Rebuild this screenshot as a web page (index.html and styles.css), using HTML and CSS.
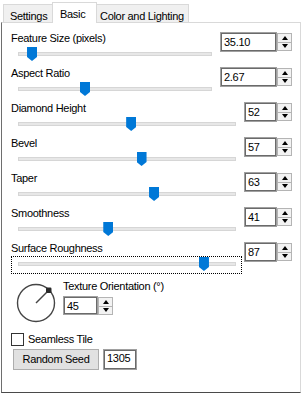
FILE: index.html
```html
<!DOCTYPE html>
<html lang="en">
<head>
    <meta charset="UTF-8">
    <title>Basic</title>
    <link rel="stylesheet" href="styles.css">
</head>
<body>
    <div class="window">
        <div class="tabs">
            <div class="tab tab-settings">Settings</div>
            <div class="tab tab-basic active">Basic</div>
            <div class="tab tab-color">Color and Lighting</div>
        </div>

        <div class="panel">
            <div class="row">
                <div class="slider-col">
                    <div class="label">Feature Size (pixels)</div>
                    <div class="slider short">
                        <div class="track"></div>
                        <div class="thumb" style="--pos: 4.9"></div>
                    </div>
                </div>
                <div class="spin">
                    <div class="spin-box wide">35.10</div>
                    <div class="spin-btns"><span class="up"></span><span class="down"></span></div>
                </div>
            </div>

            <div class="row">
                <div class="slider-col">
                    <div class="label">Aspect Ratio</div>
                    <div class="slider short">
                        <div class="track"></div>
                        <div class="thumb" style="--pos: 33.7"></div>
                    </div>
                </div>
                <div class="spin">
                    <div class="spin-box wide">2.67</div>
                    <div class="spin-btns"><span class="up"></span><span class="down"></span></div>
                </div>
            </div>

            <div class="row">
                <div class="slider-col">
                    <div class="label">Diamond Height</div>
                    <div class="slider">
                        <div class="track"></div>
                        <div class="thumb" style="--pos: 52"></div>
                    </div>
                </div>
                <div class="spin">
                    <div class="spin-box">52</div>
                    <div class="spin-btns"><span class="up"></span><span class="down"></span></div>
                </div>
            </div>

            <div class="row">
                <div class="slider-col">
                    <div class="label">Bevel</div>
                    <div class="slider">
                        <div class="track"></div>
                        <div class="thumb" style="--pos: 57"></div>
                    </div>
                </div>
                <div class="spin">
                    <div class="spin-box">57</div>
                    <div class="spin-btns"><span class="up"></span><span class="down"></span></div>
                </div>
            </div>

            <div class="row">
                <div class="slider-col">
                    <div class="label">Taper</div>
                    <div class="slider">
                        <div class="track"></div>
                        <div class="thumb" style="--pos: 63"></div>
                    </div>
                </div>
                <div class="spin">
                    <div class="spin-box">63</div>
                    <div class="spin-btns"><span class="up"></span><span class="down"></span></div>
                </div>
            </div>

            <div class="row">
                <div class="slider-col">
                    <div class="label">Smoothness</div>
                    <div class="slider">
                        <div class="track"></div>
                        <div class="thumb" style="--pos: 41"></div>
                    </div>
                </div>
                <div class="spin">
                    <div class="spin-box">41</div>
                    <div class="spin-btns"><span class="up"></span><span class="down"></span></div>
                </div>
            </div>

            <div class="row">
                <div class="slider-col">
                    <div class="label">Surface Roughness</div>
                    <div class="slider focused">
                        <div class="track"></div>
                        <div class="thumb" style="--pos: 87"></div>
                    </div>
                </div>
                <div class="spin">
                    <div class="spin-box">87</div>
                    <div class="spin-btns"><span class="up"></span><span class="down"></span></div>
                </div>
            </div>

            <div class="orient">
                <svg class="dial" width="40" height="40" viewBox="0 0 40 40">
                    <circle cx="20" cy="20" r="18.5" fill="none" stroke="#454545" stroke-width="1.4"/>
                    <line x1="20" y1="20" x2="32" y2="8" stroke="#454545" stroke-width="1.4"/>
                    <rect x="30" y="4.5" width="5.5" height="5.5" rx="1.2" fill="#2a2a2a"/>
                </svg>
                <div class="orient-col">
                    <div class="label">Texture Orientation (°)</div>
                    <div class="spin">
                        <div class="spin-box mid">45</div>
                        <div class="spin-btns"><span class="up"></span><span class="down"></span></div>
                    </div>
                </div>
            </div>

            <label class="check">
                <span class="check-box"></span>
                <span>Seamless Tile</span>
            </label>

            <div class="seed-row">
                <button class="btn">Random Seed</button>
                <div class="seed-box">1305</div>
            </div>
        </div>
    </div>
</body>
</html>
```

FILE: styles.css
```css
* {
    margin: 0;
    padding: 0;
    box-sizing: border-box;
}

body {
    width: 303px;
    height: 394px;
    overflow: hidden;
    background: #fff;
    font-family: "Liberation Sans", Arial, sans-serif;
    font-size: 11px;
    line-height: 13px;
    letter-spacing: -0.3px;
    color: #000;
}

.window {
    padding-left: 1px;
}

/* tab strip */
.tabs {
    display: flex;
    align-items: flex-end;
    height: 22px;
    padding-left: 2px;
}

.tab {
    height: 18px;
    padding-top: 5px;
    background: #f0f0f0;
    border: 1px solid #d9d9d9;
    border-bottom: none;
    white-space: nowrap;
}

.tab-settings { width: 49px; padding-left: 6px; border-right: none; }
.tab-basic { width: 45px; padding-left: 7px; }
.tab-color { width: 92px; padding-left: 3px; border-left: none; }

.tab.active {
    height: 21px;
    background: #fff;
    margin-bottom: -1px;
    position: relative;
    z-index: 1;
}

/* page */
.panel {
    width: 300px;
    height: 371px;
    background: #fff;
    border: 1px solid #d9d9d9;
    border-left-color: #6e6e6e;
    border-bottom-color: #4a4a4a;
    padding: 9px 8px 0 9px;
}

.row {
    display: flex;
    justify-content: space-between;
    height: 35px;
}

.slider {
    position: relative;
    margin-top: 1px;
    height: 18px;
    width: 231px;
    padding: 0 5px 0 6px;
    border: 1px dotted transparent;
}

.slider.short {
    width: 207px;
}

.slider.focused {
    border-color: #000;
}

.track {
    margin-top: 5px;
    height: 4px;
    background: #e7e7e7;
    border: 1px solid #d6d6d6;
}

.thumb {
    position: absolute;
    top: 0;
    left: calc(6px + (100% - 11px - 10px) * var(--pos) / 100);
    width: 10px;
    height: 14px;
    background: #0078d7;
    clip-path: polygon(0 0, 100% 0, 100% 72%, 50% 100%, 0 72%);
}

/* numeric up-down */
.spin {
    display: flex;
    height: 20px;
}

.spin-box {
    width: 33px;
    height: 20px;
    padding: 1px 0 0 3px;
    line-height: 16px;
    border: 1px solid #a0a0a0;
    box-shadow: inset 0 0 0 1px #6a6a6a;
    background: #fff;
}

.spin-box.wide { width: 57px; }
.spin-box.mid { width: 35px; height: 19px; }

.spin-btns {
    display: flex;
    flex-direction: column;
    width: 15px;
    padding: 1px 0;
}

.spin-btns span {
    flex: 1;
    display: flex;
    align-items: center;
    justify-content: center;
    background: #f3f3f3;
    border: 1px solid #b4b4b4;
}

.spin-btns span + span {
    border-top: none;
}

.spin-btns .up::after,
.spin-btns .down::after {
    content: "";
    border-left: 3px solid transparent;
    border-right: 3px solid transparent;
}

.spin-btns .up::after { border-bottom: 4px solid #000; }
.spin-btns .down::after { border-top: 4px solid #000; }

/* orientation */
.orient {
    display: flex;
    margin-top: 3px;
    height: 53px;
}

.dial {
    margin: 3px 0 0 5px;
}

.orient-col {
    margin-left: 7px;
    display: flex;
    flex-direction: column;
    gap: 3px;
}

.check {
    display: flex;
    align-items: center;
    gap: 4px;
    height: 13px;
}

.check-box {
    width: 13px;
    height: 13px;
    border: 1px solid #333;
    background: #fff;
}

.seed-row {
    display: flex;
    gap: 4px;
    margin: 3px 0 0 2px;
}

.btn {
    width: 86px;
    height: 21px;
    background: #e1e1e1;
    border: 1px solid #adadad;
    font: inherit;
    letter-spacing: inherit;
    color: #000;
}

.seed-box {
    width: 34px;
    height: 21px;
    padding: 2px 0 0 3px;
    border: 1px solid #a0a0a0;
    box-shadow: inset 0 0 0 1px #6a6a6a;
}
```
